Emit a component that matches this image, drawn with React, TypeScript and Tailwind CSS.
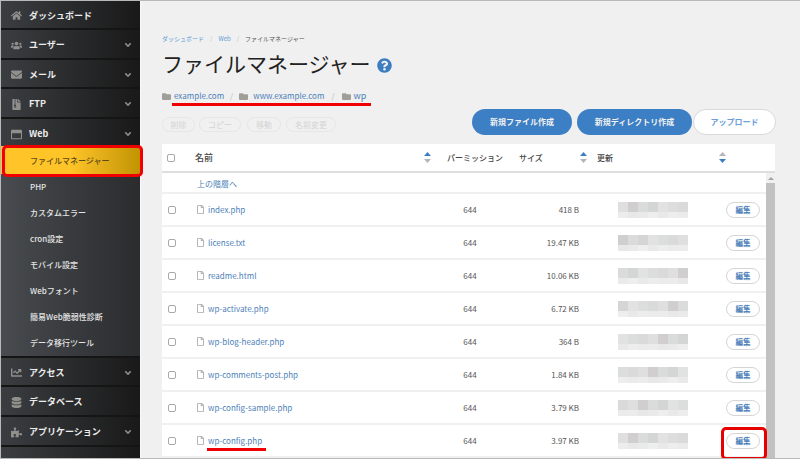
import { FaHome, FaUsers, FaEnvelope, FaFileArchive, FaRegWindowMaximize, FaChartLine, FaDatabase, FaPuzzlePiece, FaFolder, FaRegFile, FaQuestionCircle, FaAngleDown } from "react-icons/fa";
import type { ReactNode } from "react";

const font = "font-['Noto_Sans_CJK_JP','Noto_Sans',sans-serif]";

const NavItem = ({ icon, label, chevron = true, h }: { icon: ReactNode; label: string; chevron?: boolean; h: string }) => (
  <div className={`${h} flex items-center border-b-2 border-[#151515] bg-gradient-to-r from-[#3b3e41] to-[#191919] pl-[9px] pr-[7px] pt-[2px]`}>
    <span className="flex w-[19px] justify-center pr-[6px] text-[11px] text-[#8f8f8c]">{icon}</span>
    <span className="text-[9px] font-bold text-[#ececec]">{label}</span>
    {chevron && <FaAngleDown className="ml-auto text-[10px] text-[#8a8a8a]" />}
  </div>
);

const subItems = ["PHP", "カスタムエラー", "cron設定", "モバイル設定", "Webフォント", "簡易Web脆弱性診断", "データ移行ツール"];

const Sidebar = () => (
  <aside className="flex w-[139px] shrink-0 flex-col bg-[#1d1d1d]">
    <NavItem h="h-[29px]" icon={<FaHome />} label="ダッシュボード" chevron={false} />
    <NavItem h="h-[30px]" icon={<FaUsers />} label="ユーザー" />
    <NavItem h="h-[29px]" icon={<FaEnvelope />} label="メール" />
    <NavItem h="h-[30px]" icon={<FaFileArchive />} label="FTP" />
    <div className="flex h-[27px] items-center bg-gradient-to-r from-[#3b3e41] to-[#191919] pl-[9px] pr-[7px] pt-[3px]">
      <span className="flex w-[19px] justify-center pr-[6px] text-[11px] text-[#8f8f8c]"><FaRegWindowMaximize /></span>
      <span className="text-[9px] font-bold text-[#ececec]">Web</span>
      <FaAngleDown className="ml-auto text-[10px] text-[#8a8a8a]" />
    </div>
    <div className="flex h-[210px] flex-col bg-gradient-to-r from-[#484b4f] to-[#2a2c2e]">
      <div className="flex h-[28px] shrink-0 items-center bg-gradient-to-r from-[#ffc428] via-[#ffc428] to-[#c29400] pl-[29px] pt-[1px] text-[8px] font-medium text-[#5c4a1a]">
        ファイルマネージャー
      </div>
      {subItems.map((s) => (
        <div key={s} className="flex h-[26px] shrink-0 items-center pl-[29px] text-[8px] font-medium text-[#e4e4e4]">
          {s}
        </div>
      ))}
    </div>
    <NavItem h="h-[31px] border-t-2" icon={<FaChartLine />} label="アクセス" />
    <NavItem h="h-[30px]" icon={<FaDatabase />} label="データベース" chevron={false} />
    <NavItem h="h-[30px]" icon={<FaPuzzlePiece />} label="アプリケーション" />
    <div className="flex-1 bg-gradient-to-r from-[#3b3e41] to-[#191919]" />
  </aside>
);

const Sort = ({ up = true, down = false }: { up?: boolean; down?: boolean }) => (
  <svg width="7" height="11" viewBox="0 0 7 11">
    <path d="M3.5 0 L7 4 H0 Z" fill={up ? "#3d7fc4" : "#b5b5b5"} />
    <path d="M3.5 11 L7 7 H0 Z" fill={down ? "#3d7fc4" : "#b5b5b5"} />
  </svg>
);

const files: [string, string][] = [
  ["index.php", "418 B"],
  ["license.txt", "19.47 KB"],
  ["readme.html", "10.06 KB"],
  ["wp-activate.php", "6.72 KB"],
  ["wp-blog-header.php", "364 B"],
  ["wp-comments-post.php", "1.84 KB"],
  ["wp-config-sample.php", "3.79 KB"],
  ["wp-config.php", "3.97 KB"],
];

const mosaic = ["#dfdfdf", "#d0cece", "#dadcdb", "#d4d6d6", "#e2e2e2", "#dcdddd", "#dadada"];
const mosaicLow = ["#ececec", "#e8e8e8", "#eaeaea", "#eeeeee", "#e9e9e9", "#ededed", "#ebebeb"];

const Mosaic = ({ row }: { row: number }) => (
  <div className="flex h-[16px] w-[70px] flex-col">
    <div className="flex h-[10px]">
      {mosaic.map((_, i) => (
        <div key={i} className="h-full w-[10px]" style={{ backgroundColor: mosaic[(i + row) % mosaic.length] }} />
      ))}
    </div>
    <div className="flex h-[6px]">
      {mosaicLow.map((_, i) => (
        <div key={i} className="h-full w-[10px]" style={{ backgroundColor: mosaicLow[(i + row) % mosaicLow.length] }} />
      ))}
    </div>
  </div>
);

const Check = () => <div className="h-[8px] w-[8px] rounded-[2px] border border-[#a9a9a9] bg-white" />;

const Row = ({ name, size, row }: { name: string; size: string; row: number }) => (
  <div className="flex h-[33px] items-center border-b-2 border-[#f0f0f0] bg-white">
    <div className="flex w-[33px] justify-center pl-[1px] pr-[15px]"><Check /></div>
    <FaRegFile className="ml-[1px] text-[9px] text-[#a8a8a8]" />
    <span className="ml-[3px] w-[255px] text-[8px] text-[#4d7fb8]">{name}</span>
    <span className="w-[14px] text-center text-[8px] text-[#555]">644</span>
    <span className="w-[102px] text-right text-[8px] text-[#555]">{size}</span>
    <div className="ml-[39px]"><Mosaic row={row} /></div>
    <div className="ml-[38px] flex h-[16px] w-[34px] items-center justify-center rounded-full border border-[#d5d5d5] text-[7.5px] font-bold text-[#4d7fb8]">編集</div>
  </div>
);

const Pill = ({ label, w }: { label: string; w: string }) => (
  <div className={`${w} flex h-[15px] items-center justify-center rounded-full border border-[#e6e6e6] text-[8px] text-[#d4d4d4]`}>{label}</div>
);

export default function App() {
  return (
    <div className={`${font} relative flex h-[459px] w-[800px] overflow-hidden border-t border-b border-l border-[#b9b9b9] bg-[#f0f0f0]`}>
      <Sidebar />
      <main className="flex min-w-0 flex-1 flex-col border-l border-[#fafafa] pl-[21px] pr-[24px]">
        <div className="mt-[31px] flex h-[12px] items-center gap-[6px] text-[6px]">
          <span className="text-[#5b9bd5]">ダッシュボード</span>
          <span className="text-[#bbb]">/</span>
          <span className="text-[#5b9bd5]">Web</span>
          <span className="text-[#bbb]">/</span>
          <span className="text-[#555]">ファイルマネージャー</span>
        </div>
        <div className="mt-[3px] flex h-[32px] items-center">
          <h1 className="text-[21px] font-normal leading-none text-[#222]">ファイルマネージャー</h1>
          <FaQuestionCircle className="ml-[6px] mt-[5px] text-[15px] text-[#3b7dc0]" />
        </div>
        <div className="mt-[9px] flex h-[16px] items-center text-[8px] text-[#4d7fb8]">
          <FaFolder className="text-[9px] text-[#a09e98]" />
          <span className="ml-[3px]">example.com</span>
          <span className="mx-[6px] text-[#bbb]">/</span>
          <FaFolder className="text-[9px] text-[#a09e98]" />
          <span className="ml-[5px]">www.example.com</span>
          <span className="mx-[7px] text-[#bbb]">/</span>
          <FaFolder className="text-[9px] text-[#a09e98]" />
          <span className="ml-[3px] text-[9px]">wp</span>
        </div>
        <div className="mt-[5px] flex h-[26px] items-start">
          <div className="flex pt-[8px]">
            <Pill w="w-[33px]" label="削除" />
            <Pill w="ml-[4px] w-[42px]" label="コピー" />
            <Pill w="ml-[6px] w-[34px]" label="移動" />
            <Pill w="ml-[5px] w-[50px]" label="名前変更" />
          </div>
          <div className="ml-auto flex items-center">
            <div className="flex h-[26px] w-[100px] items-center justify-center rounded-full bg-[#3d7fc4] text-[8px] font-bold text-[#f2f2f2]">新規ファイル作成</div>
            <div className="ml-[5px] flex h-[26px] w-[115px] items-center justify-center rounded-full bg-[#3d7fc4] text-[8px] font-bold text-[#f2f2f2]">新規ディレクトリ作成</div>
            <div className="ml-[1px] flex h-[26px] w-[83px] items-center justify-center rounded-full border border-[#d9d9d9] bg-white text-[8px] font-bold text-[#6a9fd8]">アップロード</div>
          </div>
        </div>
        <section className="relative mt-[9px] w-[613px]">
          <div className="flex h-[29px] items-center border-b-2 border-[#dedede] bg-white text-[8px] font-medium text-[#444]">
            <div className="flex w-[33px] justify-center pr-[15px]"><Check /></div>
            <span className="w-[229px] text-[9px]">名前</span>
            <Sort />
            <span className="ml-[16px] w-[72px]">パーミッション</span>
            <span className="w-[61px]">サイズ</span>
            <Sort />
            <span className="ml-[10px] w-[122px]">更新</span>
            <Sort up={false} down />
          </div>
          <div className="mr-[9px] flex h-[21px] items-center border-b-2 border-[#f0f0f0] bg-white pl-[35px] pt-[2px] text-[8px] text-[#4d7fb8]">上の階層へ</div>
          <div className="mr-[9px]">
            {files.map(([n, s], i) => (
              <Row key={n} name={n} size={s} row={i} />
            ))}
          </div>
          {/* scrollbar */}
          <div className="absolute bottom-[-400px] right-0 top-[29px] w-[9px] bg-[#f0f0f0]">
            <div className="mx-auto mt-[4px] h-0 w-0 border-x-[3px] border-b-[3px] border-x-transparent border-b-[#a3a3a3]" />
            <div className="mt-[3px] h-full bg-[#c1c1c1]" />
          </div>
        </section>
      </main>
      {/* red annotations */}
      <div className="absolute left-[1px] top-[144px] h-[32px] w-[141px] rounded-[5px] border-[3px] border-[#f00000]" />
      <div className="absolute left-[171px] top-[102px] h-[3px] w-[199px] bg-[#f00000]" />
      <div className="absolute left-[206px] top-[447px] h-[3px] w-[59px] bg-[#f00000]" />
      <div className="absolute left-[720px] top-[426px] h-[33px] w-[46px] rounded-[5px] border-[3px] border-[#e60000]" />
    </div>
  );
}
